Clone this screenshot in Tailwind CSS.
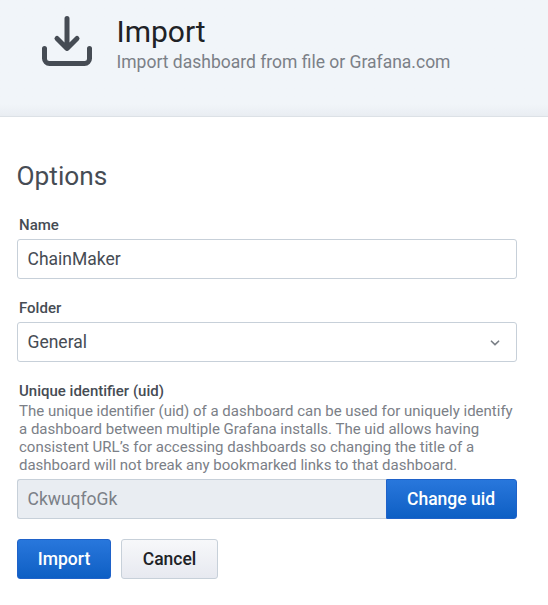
<!DOCTYPE html>
<html lang="en">
<head>
<meta charset="utf-8">
<title>Import</title>
<script src="https://cdn.jsdelivr.net/npm/@tailwindcss/browser@4"></script>
</head>
<body class="h-[605px] overflow-hidden bg-white font-['Roboto','Liberation_Sans',sans-serif] text-[17.5px] text-[#464c54]">
<header class="flex h-[117px] border-b border-[#dce1e6] bg-linear-to-b from-[#f1f5f9] from-90% to-[#e9edf2] pl-[37px] pt-[11px]">
  <svg class="size-[60px] shrink-0" viewBox="0 0 24 24" fill="#464c54"><path d="M21,14a1,1,0,0,0-1,1v4a1,1,0,0,1-1,1H5a1,1,0,0,1-1-1V15a1,1,0,0,0-2,0v4a3,3,0,0,0,3,3H19a3,3,0,0,0,3-3V15A1,1,0,0,0,21,14Zm-9.71,1.71a1,1,0,0,0,.33.21.94.94,0,0,0,.76,0,1,1,0,0,0,.33-.21l4-4a1,1,0,0,0-1.42-1.42L13,12.590V3a1,1,0,0,0-2,0v9.590l-2.290-2.300a1,1,0,1,0-1.420,1.420Z"/></svg>
  <div class="pl-[19.5px] pt-[2px]">
    <h1 class="text-[30px] leading-[37px] text-[#202226]">Import</h1>
    <p class="pt-px text-[17.5px] leading-[22px] text-[#7b8087]">Import dashboard from file or Grafana.com</p>
  </div>
</header>
<main class="w-[517px] pl-[17px] pt-[43px]">
  <h2 class="-ml-[0.5px] mb-[24px] text-[26.25px] leading-[32px]">Options</h2>
  <label class="block pl-[2px] text-[15px] leading-[18px] font-medium mb-[5px]">Name</label>
  <div class="mb-[20px] flex h-[40px] items-center rounded-[3px] border border-[#c7d0d9] px-[9.5px]">ChainMaker</div>
  <label class="mb-[5px] block pl-[2px] text-[15px] leading-[18px] font-medium">Folder</label>
  <div class="mb-[20px] flex h-[40px] items-center justify-between rounded-[3px] border border-[#c7d0d9] pl-[9.5px] pr-[11px]">General
    <svg class="mt-[2px] size-[20px]" viewBox="0 0 24 24" fill="#7b8087"><path d="M17,9.170a1,1,0,0,0-1.410,0L12,12.710,8.460,9.170a1,1,0,0,0-1.410,0,1,1,0,0,0,0,1.420l4.240,4.240a1,1,0,0,0,1.420,0L17,10.590A1,1,0,0,0,17,9.170Z"/></svg>
  </div>
  <label class="block pl-[2px] text-[15px] leading-[18px] font-medium">Unique identifier (uid)</label>
  <p class="mb-[5px] mt-[2px] pl-[2px] text-[15px] leading-[18px] whitespace-nowrap text-[#7b8087]">The unique identifier (uid) of a dashboard can be used for uniquely identify<br>a dashboard between multiple Grafana installs. The uid allows having<br>consistent URL’s for accessing dashboards so changing the title of a<br>dashboard will not break any bookmarked links to that dashboard.</p>
  <div class="mb-[20px] flex h-[40px]">
    <div class="flex flex-1 items-center rounded-l-[3px] border border-r-0 border-[#c7d0d9] bg-[#e9edf2] pl-[9.5px] text-[#7b8087]">CkwuqfoGk</div>
    <button class="w-[131px] rounded-r-[3px] border border-[#1f62c9] bg-linear-to-b from-[#2877dc] to-[#0d5fc4] pr-px font-medium text-white">Change uid</button>
  </div>
  <div class="flex gap-[10px]">
    <button class="h-[40px] w-[94px] rounded-[3px] border border-[#1f62c9] bg-linear-to-b from-[#2877dc] to-[#0d5fc4] font-medium text-white">Import</button>
    <button class="h-[40px] w-[97px] rounded-[3px] border border-[#c7d0d9] bg-linear-to-b from-[#f7f8fa] to-[#e7e9f0] font-medium text-[#202226]">Cancel</button>
  </div>
</main>
</body>
</html>
